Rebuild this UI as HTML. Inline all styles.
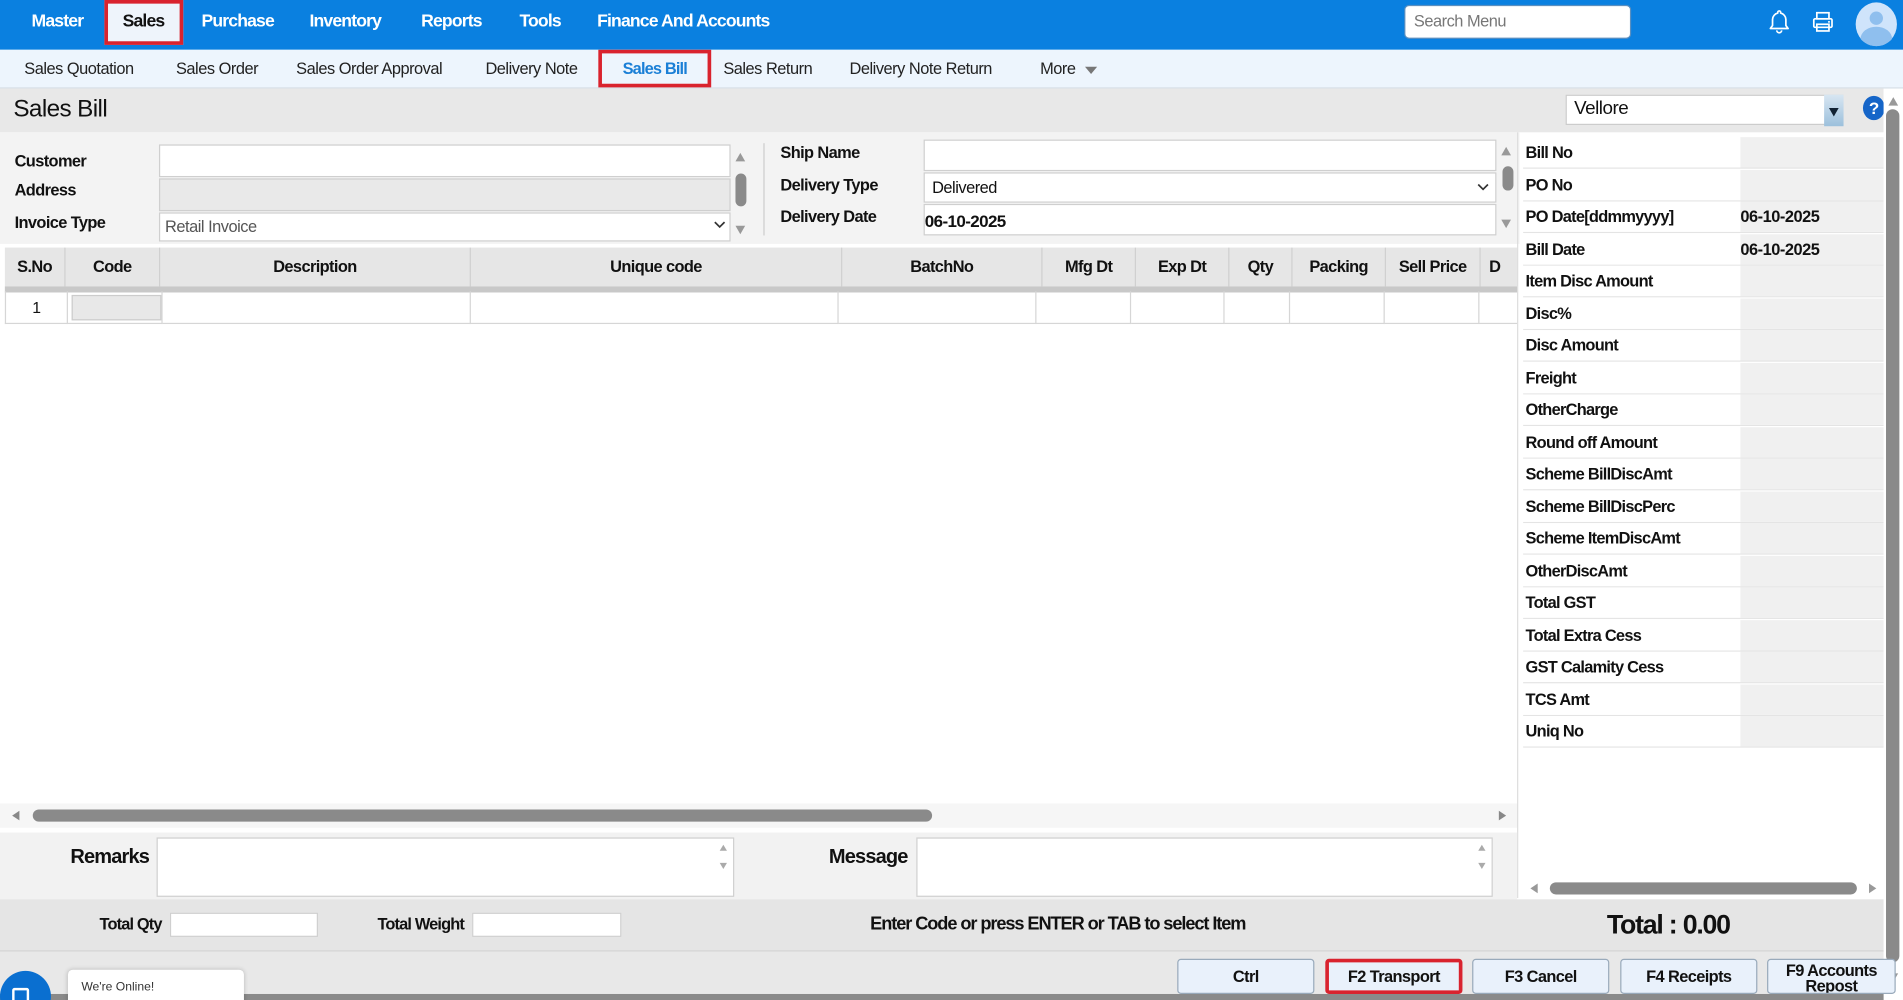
<!DOCTYPE html>
<html><head><meta charset="utf-8"><style>
*{box-sizing:border-box;margin:0;padding:0}
html,body{width:1903px;height:1000px;overflow:hidden;background:#fff}
#w{position:absolute;left:0;top:0;width:1568px;height:824px;overflow:hidden;transform:scale(1.21365);transform-origin:0 0;font-family:"Liberation Sans",sans-serif;color:#111;letter-spacing:-0.4px}
.a{position:absolute;white-space:nowrap}
.b{font-weight:bold}
.nav{font-size:14.5px;color:#fff;font-weight:bold;top:10px;letter-spacing:-0.7px}
.sub{font-size:13.5px;top:49px;color:#222}
.lbl{font-size:13.5px;font-weight:bold;letter-spacing:-0.5px}
.inp{position:absolute;background:#fff;border:1px solid #cfcfcf}
.th{position:absolute;top:204px;height:32px;border-right:1px solid #d0d0d0;font-size:13.5px;font-weight:bold;text-align:center;line-height:32px;letter-spacing:-0.5px}
.td{position:absolute;top:240px;height:27px;border-right:1px solid #d6d6d6;border-bottom:1px solid #d6d6d6}
.rr{position:absolute;left:1255px;width:297px;height:26px;border-bottom:1px solid #e4e4e4}
.rr .l{position:absolute;left:0;top:0;width:179px;height:25px;background:#fff;font-size:13.5px;font-weight:bold;line-height:25px;padding-left:2px;letter-spacing:-0.6px}
.rr .v{position:absolute;left:179px;top:0;width:118px;height:25px;background:#f0f0f0;font-size:13.5px;font-weight:bold;line-height:25px;letter-spacing:-0.4px}
.btn{position:absolute;top:790px;height:29px;width:113px;background:#e9f1fb;border:1px solid #9ab;border-radius:3px;font-size:13.5px;font-weight:bold;text-align:center;line-height:27px;letter-spacing:-0.5px}
.tri{position:absolute;width:0;height:0;border-left:4px solid transparent;border-right:4px solid transparent}
</style></head><body><div id="w">
<div class="a" style="left:0;top:0;width:1568px;height:41px;background:#0a80e0"></div>
<div class="a" style="left:86px;top:0;width:65px;height:37px;background:#eef4fb;border:3px solid #d9232e"></div>
<div class="a nav" style="left:26px">Master</div>
<div class="a nav" style="left:101px;color:#111">Sales</div>
<div class="a nav" style="left:166px">Purchase</div>
<div class="a nav" style="left:255px">Inventory</div>
<div class="a nav" style="left:347px">Reports</div>
<div class="a nav" style="left:428px">Tools</div>
<div class="a nav" style="left:492px">Finance And Accounts</div>
<div class="a" style="left:1157px;top:4px;width:187px;height:28px;background:#fff;border:1px solid #5b8fc0;border-radius:4px;font-size:13.5px;color:#777;padding:5px 7px">Search Menu</div>
<svg class="a" style="left:1456px;top:7px" width="20" height="22" viewBox="0 0 20 22"><path d="M10 2a1.2 1.2 0 0 1 1.2 1.2v.6A5.5 5.5 0 0 1 15.5 9v5l1.8 2.5H2.7L4.5 14V9a5.5 5.5 0 0 1 4.3-5.2v-.6A1.2 1.2 0 0 1 10 2zM8 18a2 2 0 0 0 4 0" fill="none" stroke="#fff" stroke-width="1.4" stroke-linejoin="round"/></svg>
<svg class="a" style="left:1492px;top:8px" width="20" height="20" viewBox="0 0 20 20"><rect x="5" y="2.5" width="10" height="5" fill="none" stroke="#fff" stroke-width="1.4"/><rect x="2.5" y="7.5" width="15" height="7" rx="1" fill="none" stroke="#fff" stroke-width="1.4"/><rect x="5" y="12" width="10" height="5.5" fill="none" stroke="#fff" stroke-width="1.4"/><circle cx="15" cy="10" r=".8" fill="#fff"/></svg>
<svg class="a" style="left:1528px;top:1px" width="36" height="38" viewBox="0 0 36 38"><ellipse cx="18" cy="19" rx="17" ry="18" fill="#cfe4fb"/><circle cx="18" cy="14" r="5.5" fill="#8fbfee"/><path d="M5 31a13 10 0 0 1 26 0a17 17 0 0 1-26 0z" fill="#8fbfee"/></svg>
<div class="a" style="left:0;top:41px;width:1568px;height:32px;background:#edf5fd;border-bottom:1px solid #d5dde6"></div>
<div class="a" style="left:493px;top:41px;width:93px;height:31px;border:3px solid #d9232e"></div>
<div class="a sub" style="left:20px">Sales Quotation</div>
<div class="a sub" style="left:145px">Sales Order</div>
<div class="a sub" style="left:244px">Sales Order Approval</div>
<div class="a sub" style="left:400px">Delivery Note</div>
<div class="a sub" style="left:513px;color:#1a7fd6;font-weight:bold;letter-spacing:-0.7px">Sales Bill</div>
<div class="a sub" style="left:596px">Sales Return</div>
<div class="a sub" style="left:700px">Delivery Note Return</div>
<div class="a sub" style="left:857px">More</div>
<div class="tri" style="left:894px;top:55px;border-top:6px solid #777;border-left-width:5px;border-right-width:5px"></div>
<div class="a" style="left:0;top:73px;width:1552px;height:36px;background:#e8e8e8"></div>
<div class="a" style="left:11px;top:79px;font-size:20px;letter-spacing:-0.5px">Sales Bill</div>
<div class="a" style="left:1290px;top:78px;width:229px;height:25px;background:#fff;border:1px solid #ccc;font-size:15.5px;padding:2px 6px">Vellore</div>
<div class="a" style="left:1503px;top:78px;width:16px;height:26px;background:linear-gradient(#d8e6f2,#9cc0dc)"></div>
<div class="tri" style="left:1507px;top:89px;border-top:7px solid #123;border-left-width:4px;border-right-width:4px"></div>
<div class="a" style="left:1535px;top:79px;width:18px;height:20px;border-radius:50%;background:#1565c8;color:#fff;font-size:14px;font-weight:bold;text-align:center;line-height:20px">?</div>
<div class="a" style="left:1552px;top:73px;width:16px;height:751px;background:#fff"></div>
<div class="tri" style="left:1556px;top:80px;border-bottom:7px solid #999"></div>
<div class="a" style="left:1554px;top:90px;width:11px;height:703px;background:#8a8a8a;border-radius:6px"></div>
<div class="tri" style="left:1556px;top:802px;border-top:7px solid #999"></div>
<div class="a" style="left:0;top:109px;width:1252px;height:92px;background:#f3f3f3"></div>
<div class="a lbl" style="left:12px;top:125px">Customer</div>
<div class="a lbl" style="left:12px;top:149px">Address</div>
<div class="a lbl" style="left:12px;top:176px">Invoice Type</div>
<div class="inp" style="left:131px;top:119px;width:471px;height:27px"></div>
<div class="inp" style="left:131px;top:147px;width:471px;height:27px;background:#e9e9e9"></div>
<div class="inp" style="left:131px;top:175px;width:471px;height:24px;font-size:13.5px;color:#555;padding:3px 4px">Retail Invoice</div>
<svg class="a" style="left:588px;top:181px" width="10" height="8"><path d="M1 2l4 4 4-4" fill="none" stroke="#333" stroke-width="1.4"/></svg>
<div class="tri" style="left:606px;top:126px;border-bottom:7px solid #999"></div>
<div class="a" style="left:606px;top:143px;width:9px;height:27px;background:#8a8a8a;border-radius:5px"></div>
<div class="tri" style="left:606px;top:186px;border-top:7px solid #999"></div>
<div class="a" style="left:629px;top:118px;width:1px;height:76px;background:#ccc"></div>
<div class="a lbl" style="left:643px;top:118px">Ship Name</div>
<div class="a lbl" style="left:643px;top:145px">Delivery Type</div>
<div class="a lbl" style="left:643px;top:171px">Delivery Date</div>
<div class="inp" style="left:761px;top:115px;width:472px;height:26px"></div>
<div class="inp" style="left:761px;top:142px;width:472px;height:25px;font-size:13.5px;padding:4px 6px">Delivered</div>
<svg class="a" style="left:1217px;top:150px" width="10" height="8"><path d="M1 2l4 4 4-4" fill="none" stroke="#333" stroke-width="1.4"/></svg>
<div class="inp" style="left:761px;top:168px;width:472px;height:26px;font-size:14px;font-weight:bold;padding:5px 0;letter-spacing:-0.5px">06-10-2025</div>
<div class="tri" style="left:1237px;top:121px;border-bottom:7px solid #999"></div>
<div class="a" style="left:1238px;top:137px;width:9px;height:20px;background:#8a8a8a;border-radius:5px"></div>
<div class="tri" style="left:1237px;top:181px;border-top:7px solid #999"></div>
<div class="a" style="left:4px;top:204px;width:1246px;height:32px;background:#e6e6e6"></div>
<div class="a" style="left:4px;top:236px;width:1246px;height:5px;background:#c8c8c8"></div>
<div class="th" style="left:4px;width:50px">S.No</div>
<div class="th" style="left:54px;width:78px">Code</div>
<div class="th" style="left:132px;width:256px">Description</div>
<div class="th" style="left:388px;width:306px">Unique code</div>
<div class="th" style="left:694px;width:165px">BatchNo</div>
<div class="th" style="left:859px;width:77px">Mfg Dt</div>
<div class="th" style="left:936px;width:77px">Exp Dt</div>
<div class="th" style="left:1013px;width:52px">Qty</div>
<div class="th" style="left:1065px;width:77px">Packing</div>
<div class="th" style="left:1142px;width:78px">Sell Price</div>
<div class="th" style="left:1220px;width:30px;border:none;text-align:left;padding-left:7px">D</div>
<div class="td" style="left:4px;width:52px;border-left:1px solid #d6d6d6;font-size:13px;text-align:center;line-height:27px">1</div>
<div class="td" style="left:56px;width:78px"></div>
<div class="a" style="left:59px;top:243px;width:74px;height:21px;background:#e8e8e8;border:1px solid #ccc"></div>
<div class="td" style="left:134px;width:254px"></div>
<div class="td" style="left:388px;width:303px"></div>
<div class="td" style="left:691px;width:163px"></div>
<div class="td" style="left:854px;width:78px"></div>
<div class="td" style="left:932px;width:77px"></div>
<div class="td" style="left:1009px;width:54px"></div>
<div class="td" style="left:1063px;width:78px"></div>
<div class="td" style="left:1141px;width:78px"></div>
<div class="td" style="left:1219px;width:31px;border-right:none"></div>
<div class="a" style="left:0;top:662px;width:1250px;height:20px;background:#f6f6f6"></div>
<div class="tri" style="left:10px;top:668px;border:4px solid transparent;border-right:6px solid #888;border-left:0"></div>
<div class="a" style="left:27px;top:667px;width:741px;height:10px;background:#8a8a8a;border-radius:5px"></div>
<div class="tri" style="left:1235px;top:668px;border:4px solid transparent;border-left:6px solid #888;border-right:0"></div>
<div class="a" style="left:1250px;top:109px;width:1px;height:631px;background:#ddd"></div>
<div class="rr" style="top:113px"><div class="l">Bill No</div><div class="v"></div></div>
<div class="rr" style="top:139.5px"><div class="l">PO No</div><div class="v"></div></div>
<div class="rr" style="top:166px"><div class="l">PO Date[ddmmyyyy]</div><div class="v">06-10-2025</div></div>
<div class="rr" style="top:192.5px"><div class="l">Bill Date</div><div class="v">06-10-2025</div></div>
<div class="rr" style="top:219px"><div class="l">Item Disc Amount</div><div class="v"></div></div>
<div class="rr" style="top:245.5px"><div class="l">Disc%</div><div class="v"></div></div>
<div class="rr" style="top:272px"><div class="l">Disc Amount</div><div class="v"></div></div>
<div class="rr" style="top:298.5px"><div class="l">Freight</div><div class="v"></div></div>
<div class="rr" style="top:325px"><div class="l">OtherCharge</div><div class="v"></div></div>
<div class="rr" style="top:351.5px"><div class="l">Round off Amount</div><div class="v"></div></div>
<div class="rr" style="top:378px"><div class="l">Scheme BillDiscAmt</div><div class="v"></div></div>
<div class="rr" style="top:404.5px"><div class="l">Scheme BillDiscPerc</div><div class="v"></div></div>
<div class="rr" style="top:431px"><div class="l">Scheme ItemDiscAmt</div><div class="v"></div></div>
<div class="rr" style="top:457.5px"><div class="l">OtherDiscAmt</div><div class="v"></div></div>
<div class="rr" style="top:484px"><div class="l">Total GST</div><div class="v"></div></div>
<div class="rr" style="top:510.5px"><div class="l">Total Extra Cess</div><div class="v"></div></div>
<div class="rr" style="top:537px"><div class="l">GST Calamity Cess</div><div class="v"></div></div>
<div class="rr" style="top:563.5px"><div class="l">TCS Amt</div><div class="v"></div></div>
<div class="rr" style="top:590px"><div class="l">Uniq No</div><div class="v"></div></div>
<div class="tri" style="left:1261px;top:728px;border:4px solid transparent;border-right:6px solid #999;border-left:0"></div>
<div class="a" style="left:1277px;top:727px;width:253px;height:10px;background:#8a8a8a;border-radius:5px"></div>
<div class="tri" style="left:1540px;top:728px;border:4px solid transparent;border-left:6px solid #999;border-right:0"></div>
<div class="a" style="left:0;top:686px;width:1250px;height:55px;background:#f2f2f2"></div>
<div class="a b" style="left:58px;top:697px;font-size:16.5px;letter-spacing:-0.7px">Remarks</div>
<div class="inp" style="left:129px;top:690px;width:476px;height:49px"></div>
<div class="a b" style="left:683px;top:697px;font-size:16.5px;letter-spacing:-0.7px">Message</div>
<div class="inp" style="left:755px;top:690px;width:475px;height:49px"></div>
<div class="tri" style="left:593px;top:696px;border-bottom:5px solid #aaa;border-width:0 3px 5px"></div>
<div class="tri" style="left:593px;top:711px;border-top:5px solid #aaa;border-width:5px 3px 0"></div>
<div class="tri" style="left:1218px;top:696px;border-bottom:5px solid #aaa;border-width:0 3px 5px"></div>
<div class="tri" style="left:1218px;top:711px;border-top:5px solid #aaa;border-width:5px 3px 0"></div>
<div class="a" style="left:0;top:741px;width:1552px;height:43px;background:#e5e5e5;border-bottom:1px solid #d4d4d4"></div>
<div class="a b" style="left:82px;top:754px;font-size:13.5px;letter-spacing:-0.7px">Total Qty</div>
<div class="inp" style="left:140px;top:752px;width:122px;height:20px"></div>
<div class="a b" style="left:311px;top:754px;font-size:13.5px;letter-spacing:-0.7px">Total Weight</div>
<div class="inp" style="left:389px;top:752px;width:123px;height:20px"></div>
<div class="a b" style="left:717px;top:753px;font-size:15px;letter-spacing:-0.9px">Enter Code or press ENTER or TAB to select Item</div>
<div class="a b" style="left:1324px;top:749px;font-size:22px;letter-spacing:-1px">Total : 0.00</div>
<div class="a" style="left:0;top:784px;width:1552px;height:40px;background:#e8e8e8"></div>
<div class="btn" style="left:970px">Ctrl</div>
<div class="btn" style="left:1092px;border:3px solid #d9232e;line-height:24px">F2 Transport</div>
<div class="btn" style="left:1213px">F3 Cancel</div>
<div class="btn" style="left:1335px">F4 Receipts</div>
<div class="btn" style="left:1456px;width:106px;line-height:13px;padding-top:2px;overflow:hidden">F9 Accounts<br>Repost</div>
<div class="a" style="left:0;top:819px;width:1552px;height:5px;background:#8a8a8a"></div>
<div class="a" style="left:0;top:800px;width:42px;height:42px;border-radius:50%;background:#0a6fd0"></div>
<div class="a" style="left:10px;top:814px;width:14px;height:12px;border:2px solid #fff;border-radius:2px;background:#0a6fd0"></div>
<div class="a" style="left:56px;top:799px;width:145px;height:30px;background:#fff;border-radius:4px;box-shadow:0 0 4px rgba(0,0,0,.2);font-size:10px;color:#333;padding:9px 11px;letter-spacing:0">We're Online!</div>
</div></body></html>
